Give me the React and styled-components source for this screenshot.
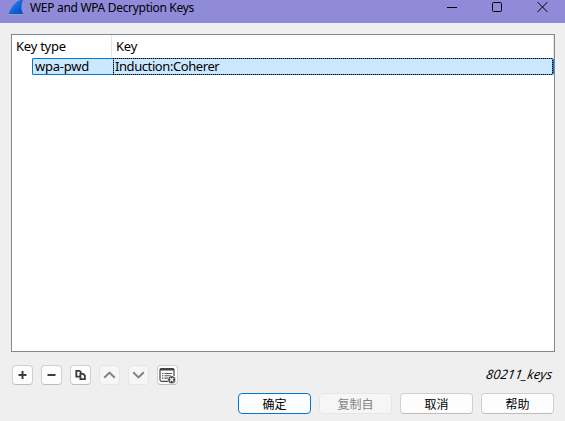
import React from "react";
import styled, { createGlobalStyle } from "styled-components";

const Global = createGlobalStyle`
  * { box-sizing: border-box; }
  html, body { margin: 0; background: #efefef; overflow: hidden; }
  button { font: inherit; margin: 0; padding: 0; }
`;

const Dialog = styled.main`
  width: 565px;
  height: 421px;
  display: flex;
  flex-direction: column;
  background: #efefef;
  color: #000;
  font-family: "Noto Sans", "Noto Sans CJK SC", sans-serif;
  font-size: 12px;
`;

const TitleBar = styled.header`
  height: 23px;
  flex: none;
  display: flex;
  align-items: flex-start;
  background: #8f8bd8;
  padding-left: 8px;
`;

const Title = styled.h1`
  margin: 0 auto 0 5px;
  font-size: 12px;
  font-weight: 400;
  line-height: 16px;
  letter-spacing: -0.31px;
  white-space: nowrap;
`;

const WindowControls = styled.div`
  display: flex;
  width: 136px;
  height: 16px;
`;

const WindowButton = styled.button`
  flex: 1;
  height: 15px;
  border: 0;
  background: none;
  display: flex;
  justify-content: center;
`;

const Body = styled.section`
  flex: 1;
  display: flex;
  flex-direction: column;
  padding: 11px 10px 8px 11px;
`;

const Tree = styled.div`
  height: 318px;
  flex: none;
  border: 1px solid #828790;
  background: #fff;
  font-size: 13px;
`;

const HeaderRow = styled.div`
  height: 23px;
  display: grid;
  grid-template-columns: 100px 1fr;
`;

const HeaderCell = styled.div`
  padding-left: 4px;
  line-height: 23px;
  border-right: 1px solid #e5e5e5;
  letter-spacing: -0.24px;
`;

const SelectedRow = styled.div`
  height: 17px;
  margin-left: 20px;
  display: grid;
  grid-template-columns: 81px 1fr;
  background: #cce8ff;
  border-right: 1px solid #0078d4;
  border-radius: 2px;
  line-height: 15px;
`;

const TypeCell = styled.div`
  border: 1px solid #0078d4;
  border-right: 0;
  border-radius: 2px 0 0 2px;
  padding-left: 2px;
  letter-spacing: -0.24px;
`;

const dots = (angle) =>
  `repeating-linear-gradient(${angle}, #000 0 1px, #3c8cc8 1px 2px)`;

const KeyCell = styled.div`
  padding: 1px 1px 1px 2px;
  background:
    ${dots("90deg")} top / 100% 1px no-repeat,
    ${dots("90deg")} bottom / 100% 1px no-repeat,
    ${dots("180deg")} left / 1px 100% no-repeat,
    ${dots("180deg")} right / 1px 100% no-repeat;
  letter-spacing: -0.42px;
`;

const Toolbar = styled.div`
  height: 20px;
  margin: 13px 3px 0 1px;
  display: flex;
  gap: 8px;
`;

const ToolButton = styled.button`
  width: 21px;
  height: 20px;
  display: flex;
  align-items: center;
  justify-content: center;
  border: 1px solid ${(p) => (p.disabled ? "#e6e6e6" : "#d0d0d0")};
  border-bottom-color: ${(p) => (p.disabled ? "#e6e6e6" : "#bdbdbd")};
  border-radius: 4px;
  background: ${(p) => (p.disabled ? "#f6f6f6" : "#fdfdfd")};
  color: ${(p) => (p.disabled ? "#828282" : "#3c3c3c")};
  svg { flex: none; }
`;

const FileLink = styled.span`
  margin-left: auto;
  font-family: "Open Sans", "Noto Sans", sans-serif;
  font-style: italic;
  font-size: 13px;
  line-height: 19px;
  letter-spacing: 0.08px;
  transform: skewX(-8deg);
`;

const Actions = styled.footer`
  margin: 8px 1px 0 0;
  display: flex;
  justify-content: flex-end;
  gap: 8px;
`;

const ActionButton = styled.button`
  width: 73px;
  height: 21px;
  border: 1px solid
    ${(p) => (p.$primary ? "#0078d4" : p.disabled ? "#e6e6e6" : "#d0d0d0")};
  ${(p) => !p.$primary && !p.disabled && "border-bottom-color: #bdbdbd;"}
  border-radius: 4px;
  background: ${(p) => (p.disabled ? "#f6f6f6" : "#fdfdfd")};
  color: ${(p) => (p.disabled ? "#838383" : "#000")};
  font-family: "Noto Sans CJK SC", sans-serif;
  line-height: 18px;
`;

const FinIcon = () => (
  <svg width="17" height="16" viewBox="0 0 17 16">
    <defs>
      <linearGradient id="fin" x1="0" y1="0" x2="1" y2="1">
        <stop offset="0" stopColor="#4aa0f0" />
        <stop offset="0.5" stopColor="#1268dc" />
        <stop offset="1" stopColor="#0846b8" />
      </linearGradient>
    </defs>
    <path d="M0.5 14.5C3 7 7 1 15.5 -1C12.5 5 13 10 15.5 14.5Z" fill="url(#fin)" />
    <path d="M0.5 14.5H15.5" stroke="#8fa3c8" />
  </svg>
);

const PlusIcon = () => (
  <svg width="9" height="10" viewBox="0 0 9 10" stroke="currentColor" strokeWidth="2">
    <path d="M0.5 5H8.5M4.5 1V9" />
  </svg>
);

const MinusIcon = () => (
  <svg width="9" height="10" viewBox="0 0 9 10" stroke="currentColor" strokeWidth="2">
    <path d="M0.5 5H8.5" />
  </svg>
);

const CopyIcon = () => (
  <svg width="11" height="10" viewBox="0 0 11 10" fill="none" stroke="currentColor" strokeWidth="1.8">
    <path d="M5 6.6H1.3V0.9H4.6L5.8 2.1V4" />
    <path d="M5.4 3.9H8.2L9.9 5.6V9.1H5.4Z" />
  </svg>
);

const ChevronIcon = ({ down }) => (
  <svg width="13" height="10" viewBox="0 0 13 10" fill="none" stroke="currentColor" strokeWidth="2">
    <path d={down ? "M1.2 2.2L6.5 7.4L11.8 2.2" : "M1.2 7.8L6.5 2.6L11.8 7.8"} />
  </svg>
);

const ClearListIcon = () => (
  <svg width="17" height="17" viewBox="0 0 17 17">
    <path d="M9 14.3H2.5Q1 14.3 1 12.8V3Q1 1.5 2.5 1.5H13.5Q15 1.5 15 3V9" fill="none" stroke="#444" strokeWidth="1.2" />
    <path d="M1 3.5V2.5Q1 1 2.5 1H13.5Q15 1 15 2.5V3.5Z" fill="#444" />
    <path d="M3 6.5H4.5M5.5 6.5H13M3 8.8H4.5M5.5 8.8H12M3 11.1H4.5M5.5 11.1H9" stroke="#555" strokeWidth="1.1" />
    <circle cx="12.7" cy="12.7" r="4" fill="#444" stroke="#fdfdfd" strokeWidth="0.7" />
    <path d="M11 11L14.4 14.4M14.4 11L11 14.4" stroke="#fff" strokeWidth="1.2" />
  </svg>
);

export default function App() {
  return (
    <Dialog>
      <Global />
      <TitleBar>
        <FinIcon />
        <Title>WEP and WPA Decryption Keys</Title>
        <WindowControls>
          <WindowButton aria-label="Minimize">
            <svg width="12" height="15"><path d="M1 7.5H11" stroke="#000" /></svg>
          </WindowButton>
          <WindowButton aria-label="Maximize">
            <svg width="12" height="15">
              <rect x="1.5" y="2.5" width="9" height="9" rx="1" fill="none" stroke="#000" />
            </svg>
          </WindowButton>
          <WindowButton aria-label="Close">
            <svg width="12" height="15">
              <path d="M1.5 2L11.5 12M11.5 2L1.5 12" stroke="#000" />
            </svg>
          </WindowButton>
        </WindowControls>
      </TitleBar>
      <Body>
        <Tree>
          <HeaderRow>
            <HeaderCell>Key type</HeaderCell>
            <HeaderCell>Key</HeaderCell>
          </HeaderRow>
          <SelectedRow>
            <TypeCell>wpa-pwd</TypeCell>
            <KeyCell>Induction:Coherer</KeyCell>
          </SelectedRow>
        </Tree>
        <Toolbar>
          <ToolButton aria-label="Add"><PlusIcon /></ToolButton>
          <ToolButton aria-label="Remove"><MinusIcon /></ToolButton>
          <ToolButton aria-label="Copy"><CopyIcon /></ToolButton>
          <ToolButton aria-label="Move up" disabled><ChevronIcon /></ToolButton>
          <ToolButton aria-label="Move down" disabled><ChevronIcon down /></ToolButton>
          <ToolButton aria-label="Clear all"><ClearListIcon /></ToolButton>
          <FileLink>80211_keys</FileLink>
        </Toolbar>
        <Actions>
          <ActionButton $primary>确定</ActionButton>
          <ActionButton disabled>复制自</ActionButton>
          <ActionButton>取消</ActionButton>
          <ActionButton>帮助</ActionButton>
        </Actions>
      </Body>
    </Dialog>
  );
}
